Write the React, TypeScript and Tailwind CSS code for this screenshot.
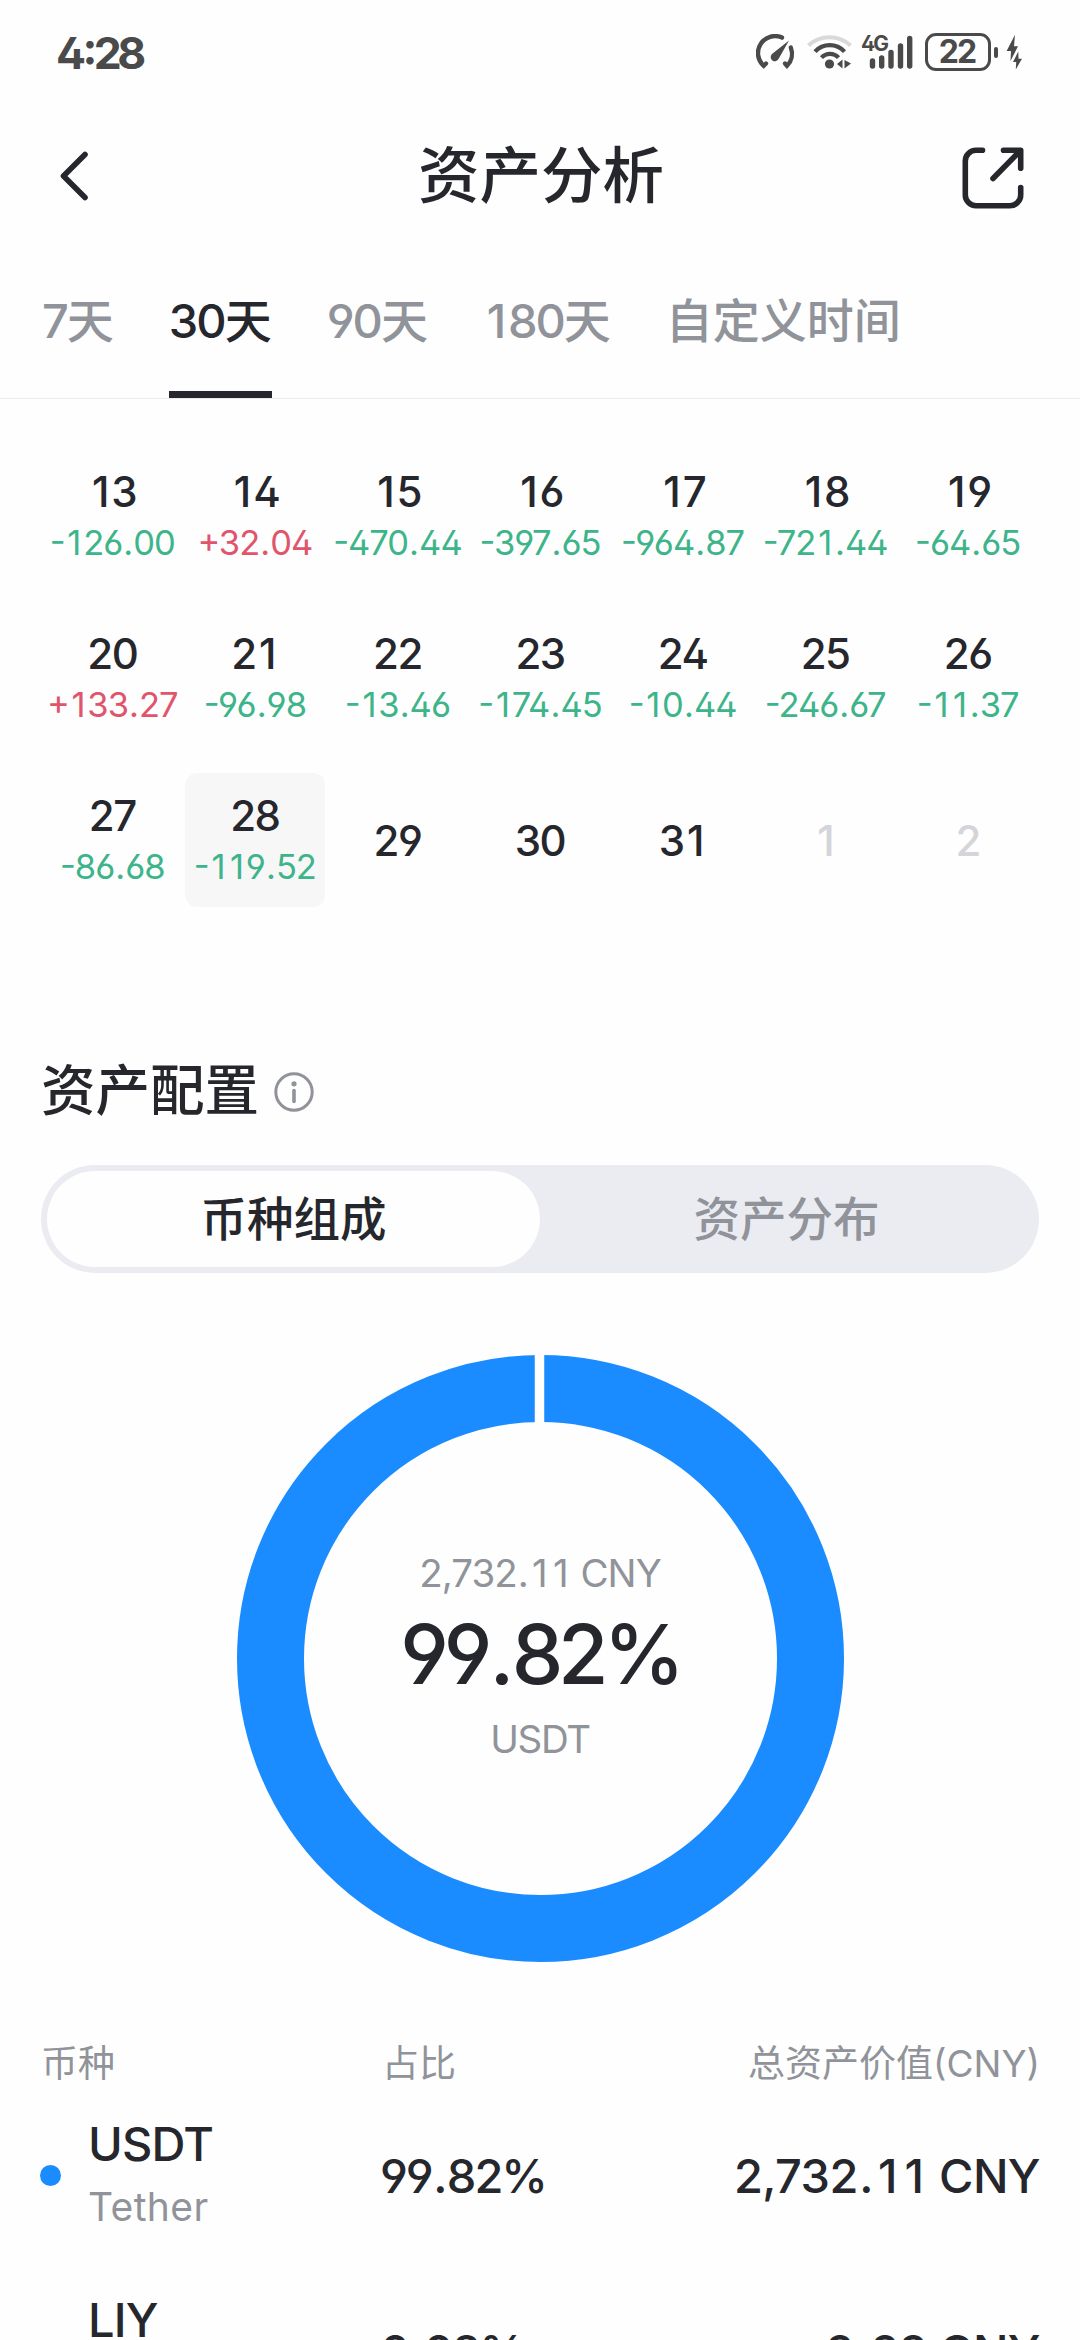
import { clsx } from "clsx";

interface Day {
  day: number;
  pnl?: string;
  selected?: boolean;
  outside?: boolean;
}

interface Coin {
  symbol: string;
  name?: string;
  share: string;
  value: string;
}

const DAYS: Day[] = [
  { day: 13, pnl: "-126.00" },
  { day: 14, pnl: "+32.04" },
  { day: 15, pnl: "-470.44" },
  { day: 16, pnl: "-397.65" },
  { day: 17, pnl: "-964.87" },
  { day: 18, pnl: "-721.44" },
  { day: 19, pnl: "-64.65" },
  { day: 20, pnl: "+133.27" },
  { day: 21, pnl: "-96.98" },
  { day: 22, pnl: "-13.46" },
  { day: 23, pnl: "-174.45" },
  { day: 24, pnl: "-10.44" },
  { day: 25, pnl: "-246.67" },
  { day: 26, pnl: "-11.37" },
  { day: 27, pnl: "-86.68" },
  { day: 28, pnl: "-119.52", selected: true },
  { day: 29 },
  { day: 30 },
  { day: 31 },
  { day: 1, outside: true },
  { day: 2, outside: true },
];

const RANGES = [
  { num: "7", label: "天" },
  { num: "30", label: "天", active: true },
  { num: "90", label: "天" },
  { num: "180", label: "天" },
  { num: "", label: "自定义时间" },
];

const COINS: Coin[] = [
  { symbol: "USDT", name: "Tether", share: "99.82%", value: "2,732.11 CNY" },
  { symbol: "LIY", share: "0.08%", value: "2.22 CNY" },
];

// Inter's "1" and "." are narrow: pad them towards the width of the other digits
function Num({ value, className }: { value: string; className?: string }) {
  return (
    <span className={clsx("whitespace-pre", className)}>
      {value.split(/([1.])/).map((part, i) => {
        if (part === "1") return <span key={i} className="mx-[0.08em]">1</span>;
        if (part === ".") return <span key={i} className="mx-[0.03em]">.</span>;
        return part;
      })}
    </span>
  );
}

function StatusBar() {
  return (
    <div className="flex h-[108px] shrink-0 items-center justify-between pl-[56px] pr-[57px] text-[#4a4a4a]">
      <span className="pb-[2px] text-[44.5px] font-bold leading-none tracking-[-4.5px]">
        4<span className="mx-[0.02em]">:</span>28
      </span>
      <div className="flex items-center pb-[4px]">
        {/* speed */}
        <svg width="40" height="36" viewBox="0 0 40 36" fill="none" stroke="currentColor" strokeWidth="4.4" strokeLinecap="round">
          <path d="M10 29.500L7.700 31.800A17 17 0 0 1 26 3.600" />
          <path d="M34.800 13.500A17 17 0 0 1 31 31.800L29 29.500" />
          <path d="M33 6.500L22.800 24.500a4.200 4.200 0 1 1-6.500-4.800z" fill="currentColor" stroke="none" />
        </svg>
        {/* wifi */}
        <svg className="ml-[11px]" width="46" height="36" viewBox="0 0 46 36" fill="none" strokeWidth="4.2">
          <path d="M1.500 11.500C13 .5 32 .5 43.500 11.500" stroke="#d9d9d9" />
          <path d="M8 17.600C16 9 29.500 9 37.500 17.600" stroke="currentColor" />
          <path d="M14.500 23.600C19 18.500 27 18.500 31.500 23.600" stroke="currentColor" />
          <circle cx="22.500" cy="30" r="4.600" fill="currentColor" />
          <path d="M35.500 25.500v9l-5.500-4.500zM37.500 26l6.500 3.500-6.500 5z" fill="currentColor" />
        </svg>
        {/* signal */}
        <div className="relative ml-[9px] h-[36px] w-[53px]">
          <span className="absolute -left-[1px] -top-[1px] text-[21px] font-bold leading-none tracking-[-2px]">4G</span>
          <svg width="53" height="36" viewBox="0 0 53 36" stroke="currentColor" strokeWidth="5.4" strokeLinecap="round">
            <path d="M10.500 27v5M19.700 24v8M29 18.500v13.500M38.500 12v20M47.700 4.500v27.500" />
          </svg>
        </div>
        <div className="ml-[10px] flex h-[38px] w-[66px] items-center justify-center rounded-[11px] border-[3px] border-[#4a4a4a] pr-[2px] text-[32px] font-bold leading-none tracking-[-2px]">
          22
        </div>
        <div className="ml-[3px] h-[11px] w-[4px] rounded-full bg-[#4a4a4a]" />
        {/* charging */}
        <svg className="ml-[8px]" width="17" height="36" viewBox="0 0 17 36" fill="currentColor">
          <path d="M9 .8L.6 17H5L4.500 27 12 12.300H8z" />
          <path d="M12.300 17.500L7 28h3.200L9.800 35.400 16 24.800H12.500z" />
        </svg>
      </div>
    </div>
  );
}

function Header() {
  return (
    <div className="flex h-[136px] shrink-0 items-center justify-between pl-[58px] pr-[56px]">
      <svg width="62" height="50" viewBox="0 0 62 50" fill="none" stroke="currentColor" strokeWidth="5.6" strokeLinecap="round" strokeLinejoin="round">
        <path d="M27 3.500L5.500 25l21.500 21.500" />
      </svg>
      <h1 className="text-[61.5px] font-medium leading-none">资产分析</h1>
      <svg className="mt-[3px]" width="62" height="62" viewBox="0 0 62 62" fill="none" stroke="currentColor" strokeWidth="5.6" strokeLinecap="round" strokeLinejoin="round">
        <path d="M20.500 3.300H14A10.700 10.700 0 0 0 3.300 14v34A10.700 10.700 0 0 0 14 58.700h34A10.700 10.700 0 0 0 58.700 48v-7.500" />
        <path d="M41.500 3.300h17.200v18M58 4L31 31.500" />
      </svg>
    </div>
  );
}

function RangeTabs() {
  return (
    <div className="flex h-[155px] shrink-0 gap-[55px] border-b border-[#ececee] pl-[42px]">
      {RANGES.map((r) => (
        <div
          key={r.num + r.label}
          className={clsx(
            "flex flex-col justify-between text-[47px] font-medium leading-none",
            r.active ? "text-[#25272d]" : "text-[#909399]",
          )}
        >
          <div className="flex items-center pt-[53px]">
            {r.num && <Num value={r.num} className="tracking-[-2px]" />}
            <span>{r.label}</span>
          </div>
          {r.active && <div className="h-[7px] bg-[#25272d]" />}
        </div>
      ))}
    </div>
  );
}

function DayCell({ day, pnl, selected, outside }: Day) {
  return (
    <div
      className={clsx(
        "mx-px flex h-[134px] flex-col items-center justify-center gap-[9px] rounded-xl pt-[2px]",
        selected && "bg-[#f7f7f8]",
        outside && "text-[#d3d5d8]",
      )}
    >
      <Num value={String(day)} className="text-[42px] font-medium leading-[42px] tracking-[-1.5px]" />
      {pnl && (
        <Num
          value={pnl}
          className={clsx(
            "text-[34.5px] leading-[42px] tracking-[-1px]",
            pnl.startsWith("+") ? "text-[#e0556b]" : "text-[#3db489]",
          )}
        />
      )}
    </div>
  );
}

function Donut() {
  return (
    <div className="relative mx-auto mt-[82px] flex h-[607px] w-[607px] shrink-0 flex-col items-center">
      <svg className="absolute inset-0" width="607" height="607" viewBox="0 0 607 607" fill="none">
        <circle cx="303.5" cy="303.5" r="270" stroke="#1a8cff" strokeWidth="67" />
        <path d="M302.500 0v70" stroke="#fff" strokeWidth="9.5" />
      </svg>
      <div className="relative mt-[196px] flex flex-col items-center">
        <Num value="2,732.11 CNY" className="text-[38.5px] leading-[44px] tracking-[-1px] text-[#909399]" />
        <Num value="99.82%" className="mt-[18px] text-[82px] font-medium leading-[84px] tracking-[-5.2px]" />
        <span className="mt-[20px] text-[38.5px] leading-[44px] tracking-[-1.3px] text-[#909399]">USDT</span>
      </div>
    </div>
  );
}

export default function App() {
  return (
    <div className="flex h-[2340px] w-[1080px] flex-col overflow-hidden bg-[#fefefe] font-['Inter','Noto_Sans_CJK_SC',sans-serif] text-[#25272d] [font-feature-settings:'cv02','cv03','cv04','case']">
      <StatusBar />
      <Header />
      <RangeTabs />

      <div className="mx-[41px] mt-[50px] grid shrink-0 grid-cols-7 gap-y-[28px]">
        {DAYS.map((d, i) => (
          <DayCell key={i} {...d} />
        ))}
      </div>

      <div className="mt-[153px] flex h-[60px] shrink-0 items-center gap-[15px] pl-[41px]">
        <h2 className="text-[54.5px] font-medium leading-none">资产配置</h2>
        <svg className="mt-[4px]" width="40" height="40" viewBox="0 0 40 40" fill="none" stroke="#909399" strokeWidth="3">
          <circle cx="20" cy="20" r="18.2" />
          <path d="M20 18.500v11" strokeWidth="3.6" strokeLinecap="round" />
          <circle cx="20" cy="11.8" r="2.6" fill="#909399" stroke="none" />
        </svg>
      </div>

      <div className="mx-[41px] mt-[45px] flex h-[108px] shrink-0 rounded-full bg-[#ebecf2] p-[6px] text-[46.5px] font-medium leading-none">
        <div className="flex flex-1 items-center justify-center rounded-full bg-[#fefefe]">币种组成</div>
        <div className="flex flex-1 items-center justify-center text-[#909399]">资产分布</div>
      </div>

      <Donut />

      <div className="mt-[77px] flex h-[48px] shrink-0 items-center pl-[41px] pr-[40px] text-[37px] leading-none text-[#909399]">
        <span className="w-[341px]">币种</span>
        <span>占比</span>
        <span className="ml-auto">总资产价值(CNY)</span>
      </div>

      {COINS.map((c) => (
        <div key={c.symbol} className="flex h-[176px] shrink-0 items-center pl-[40px] pr-[40px] text-[47px] font-medium leading-none">
          <span className="size-[21px] rounded-full bg-[#1a8cff]" />
          <div className="ml-[27px] mt-[2px] flex h-[112px] w-[292px] flex-col gap-[20px]">
            <span className="tracking-[-0.8px]">{c.symbol}</span>
            {c.name && <span className="text-[39px] font-normal tracking-[0.4px] text-[#909399]">{c.name}</span>}
          </div>
          <Num value={c.share} className="tracking-[-2px]" />
          <Num value={c.value} className="ml-auto tracking-[-0.6px]" />
        </div>
      ))}
    </div>
  );
}
